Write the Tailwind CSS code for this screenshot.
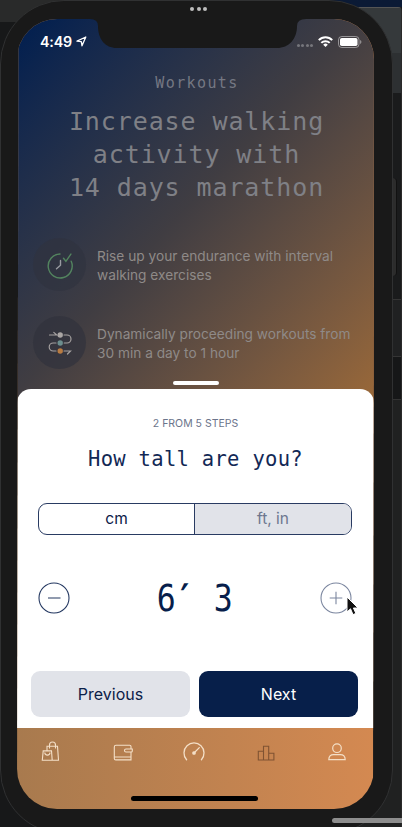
<!DOCTYPE html>
<html lang="en">
<head>
<meta charset="utf-8">
<title>Workouts</title>
<script src="https://cdn.jsdelivr.net/npm/@tailwindcss/browser@4"></script>
</head>
<body class="relative h-[827px] w-[402px] overflow-hidden bg-[#171819] font-[Inter,sans-serif]">
<!-- desktop behind the phone -->
<div class="absolute inset-x-0 top-0 h-[7px] bg-linear-to-r from-[#2b2c2c] from-40% to-[#0b1a35] to-50%"></div>
<div class="absolute top-0 left-0 h-[22px] w-[60px] bg-[#292a2a]"></div>
<div class="absolute top-[7px] right-0 flex h-[820px] w-[60px] flex-col rounded-tr border-t border-r border-t-[#555] border-r-[#2a2a2a] bg-[#191a1b]">
  <div class="h-[45px] bg-[#35393b]"></div><div class="h-[40px] bg-[#2d3032]"></div><div class="h-[206px] bg-[#1a1b1c]"></div>
  <div class="h-[58px] border-y border-[#353535] bg-[#202122]"></div><div class="h-[42px] bg-[#161718]"></div><div class="flex-1 border-t border-[#333] bg-[#202121]"></div>
</div>
<div class="absolute top-[178px] left-[391px] h-[98px] w-[6px] rounded-r border-r border-[#111] bg-[#2c2c2c]"></div>

<!-- phone -->
<div class="absolute top-0 left-0 h-[834px] w-[393px] rounded-[64px] border border-[#303132] bg-[#191919] pt-[18px] pl-[16px]">
  <div class="flex h-[790px] w-[357px] flex-col overflow-hidden rounded-[40px] bg-linear-to-r from-[#a87a4e] to-[#d48951] [clip-path:polygon(1.5px_0,100%_0,356px_100%,0_100%)]">
    <div class="h-[388px] shrink-0 bg-linear-to-br from-[#04204f] from-3% via-[#403d42] via-48% to-[#9b6938]">
      <div class="flex h-[45px] items-center justify-between pr-[12px] pl-[23px] text-white">
        <div class="flex items-center gap-[4px] text-[14.3px] font-semibold tracking-[-0.2px]"><span>4:49</span>
          <svg class="h-[11px] w-[11px]" viewBox="0 0 11 11" fill="none" stroke="currentColor" stroke-width="1.3" stroke-linejoin="round"><path d="M1 5.2 9.8 1 6 9.8 5.3 5.6Z"/></svg>
        </div>
        <div class="flex items-center">
          <div class="mt-[7px] mr-[5px] flex gap-[1.5px]"><i class="size-[3px] rounded-full bg-white/30"></i><i class="size-[3px] rounded-full bg-white/30"></i><i class="size-[3px] rounded-full bg-white/30"></i><i class="size-[3px] rounded-full bg-white/30"></i></div>
          <svg class="mr-[5px] h-[11px] w-[15px]" viewBox="0 0 15 11" fill="none" stroke="#fff" stroke-width="2"><path d="M.8 4.1a9.4 9.4 0 0 1 13.4 0M3.3 6.9a5.9 5.9 0 0 1 8.4 0"/><path d="M7.5 11 5.2 8.7a3.2 3.2 0 0 1 4.6 0Z" fill="#fff" stroke="none"/></svg>
          <svg class="h-[12px] w-[24px]" viewBox="0 0 24 12"><rect x=".5" y=".5" width="20.5" height="11" rx="3.3" fill="none" stroke="#fff" stroke-opacity=".45"/><rect x="2" y="2" width="17.5" height="8" rx="1.8" fill="#fff"/><path d="M22.2 4v4c1.6-.7 1.6-3.3 0-4Z" fill="#fff" fill-opacity=".5"/></svg>
        </div>
      </div>
      <div class="flex h-[38px] items-center justify-center pl-[3px] font-['DejaVu_Sans_Mono',monospace] text-[15px] tracking-[1.4px] text-[#757883]">Workouts</div>
      <div class="mt-[3px] flex flex-col items-center font-['DejaVu_Sans_Mono',monospace] text-[25px] leading-[33px] font-normal tracking-[.9px] whitespace-nowrap text-[#7f8086]">
        <span class="pl-[2px]">Increase walking</span>
        <span class="pl-[2px]">activity with</span>
        <span class="pl-[2px]">14 days marathon</span>
      </div>
      <div class="mt-[34px] flex flex-col gap-[25px] pl-[16px] text-[13.7px] leading-[19px] whitespace-nowrap text-[#8f8a88]">
        <div class="flex h-[53px] items-center gap-[11px]">
          <div class="flex size-[53px] items-center justify-center rounded-full bg-[#30333f]/65">
            <svg class="size-[28px]" viewBox="0 0 28 28" fill="none" stroke-width="1.4" stroke-linecap="round"><path d="M14 3A12 12 0 1 0 25.2 10.2M17.5 7.3l2.4 3 5-7.2" stroke="#53845f"/><path d="M14.5 9.5v4.7l-4 3.6" stroke="#999ba1"/></svg>
          </div>
          <p class="mt-[2px]">Rise up your endurance with interval<br>walking exercises</p>
        </div>
        <div class="flex h-[53px] items-center gap-[11px]">
          <div class="flex size-[53px] items-center justify-center rounded-full bg-[#30313c]/65">
            <svg class="size-[26px]" viewBox="0 0 26 26" fill="none" stroke="#a5a1a0" stroke-width="1.2" stroke-linecap="round"><path d="M2.5 5h7.2L6.8 2.4M17 5h3a4 4 0 0 1 0 8h-2.8M9 13H6.2a4 4 0 0 0 0 8H9M17 21h6.5l-3 3"/><g stroke="none"><circle cx="13.2" cy="5" r="2.7" fill="#aaa6a4"/><circle cx="13.2" cy="13" r="2.7" fill="#6c8e8e"/><circle cx="13.2" cy="21" r="2.7" fill="#b87c43"/></g></svg>
          </div>
          <p class="mt-[2px]">Dynamically proceeding workouts from<br>30 min a day to 1 hour</p>
        </div>
      </div>
    </div>

    <!-- height sheet -->
    <div class="relative z-10 -mt-[18px] h-[339px] shrink-0 rounded-t-[14px] bg-white px-[15px] text-[#0b2048]">
      <div class="absolute -top-[8px] left-[156px] h-[4px] w-[46px] rounded-full bg-white"></div>
      <p class="flex h-[69px] items-center justify-center text-[10.5px] text-[#6b748b]">2 FROM 5 STEPS</p>
      <h2 class="flex h-[3px] items-center justify-center font-['DejaVu_Sans_Mono',monospace] text-[20.5px] tracking-[.3px] whitespace-nowrap text-[#122855]">How tall are you?</h2>
      <div class="mr-[7px] ml-[6px] mt-[42px] flex h-[32px] overflow-hidden rounded-[9px] border border-[#293b62] text-[15.5px]">
        <div class="flex w-1/2 items-center justify-center border-r border-[#293b62]">cm</div>
        <div class="flex w-1/2 items-center justify-center bg-[#e1e3e9] text-[#6d778f]">ft, in</div>
      </div>
      <div class="mr-[7px] ml-[6px] mt-[47px] flex h-[32px] items-center justify-between">
        <svg class="size-[32px]" viewBox="0 0 32 32" fill="none" stroke="#243861" stroke-width="1.1"><circle cx="16" cy="16" r="15"/><path d="M10 16h12.5"/></svg>
        <span class="inline-block scale-x-[.83] font-['DejaVu_Sans_Mono',monospace] text-[38px] whitespace-nowrap text-[#071e4b]">6<span class="inline-block -translate-x-[2px] -skew-x-6 font-bold">′</span> 3</span>
        <svg class="size-[32px]" viewBox="0 0 32 32" fill="none" stroke="#7b869f" stroke-width="1.1"><circle cx="16" cy="16" r="15"/><path d="M9.7 16h12.6M16 9.7v12.6"/></svg>
      </div>
      <div class="-ml-px mr-px mt-[57px] flex gap-[9px] text-[16px]">
        <div class="flex h-[46px] flex-1 items-center justify-center rounded-[9px] bg-[#e1e3e9]">Previous</div>
        <div class="flex h-[46px] flex-1 items-center justify-center rounded-[9px] bg-[#071f4a] text-white">Next</div>
      </div>
    </div>

    <!-- tab bar -->
    <div class="relative flex-1">
      <div class="flex justify-between pt-[12px] pr-[25px] pl-[22px] text-[#f4dfc7]">
        <svg class="size-[24px]" viewBox="0 0 24 24" fill="none" stroke="currentColor" stroke-width="1.1"><path d="M8 11V6.3h10.5l1 14H13M10.5 8.5V5a3 3 0 0 1 6 0v3.5M4.2 10.9h8.3l.7 9.4H3.3Z"/><path d="M5.8 12.5a2.6 2.6 0 0 0 5.2 0"/></svg>
        <svg class="size-[24px]" viewBox="0 0 24 24" fill="none" stroke="currentColor" stroke-width="1.1"><path d="M20 9V6.5Q20 5.2 18.7 5.2H5Q3.3 5.2 3.3 7v11.4q0 1.5 1.5 1.5H20v-8M3.3 17H20M20 9h-5a1.5 1.5 0 0 0 0 3h5.3q1 0 1-1V9Z"/></svg>
        <svg class="size-[24px]" viewBox="0 0 24 24" fill="none" stroke="currentColor" stroke-width="1.3" stroke-linecap="round"><path d="M4.6 19.7a10 10 0 1 1 14.8 0M12.5 12.5l4.8-4.9"/><circle cx="12" cy="13" r="1.2" fill="currentColor"/></svg>
        <svg class="size-[24px] text-[#805332]" viewBox="0 0 24 24" fill="none" stroke="currentColor" stroke-width="1.1"><path d="M4.3 20V11.2h5.2V20ZM9.5 20V6.3h5.2V20ZM14.7 20v-6.8h5.2V20Z"/></svg>
        <svg class="size-[24px]" viewBox="0 0 24 24" fill="none" stroke="currentColor" stroke-width="1.2"><circle cx="12" cy="8.2" r="4.3"/><path d="M3.8 19.7c0-3.6 2.4-5 5-5h6.4c2.6 0 5 1.4 5 5Z"/></svg>
      </div>
      <div class="absolute bottom-[8px] left-[114px] h-[5px] w-[127px] rounded-full bg-black"></div>
    </div>
  </div>
</div>
<!-- notch -->
<svg class="absolute top-[15px] left-[90px] h-[34px] w-[216px]" viewBox="0 0 216 34"><path d="M0 0H216V4Q207 4 207 11C207 24 199 33 187 33H27C15 33 8 24 8 11Q8 4 0 4Z" fill="#191919"/></svg>
<div class="absolute top-[7px] left-[190px] flex gap-[2.5px]"><i class="size-[4px] rounded-full bg-[#bdbdbd]"></i><i class="size-[4px] rounded-full bg-[#bdbdbd]"></i><i class="size-[4px] rounded-full bg-[#bdbdbd]"></i></div>
<!-- pointer -->
<svg class="absolute top-[596px] left-[346px] h-[20px] w-[13px]" viewBox="0 0 13 20"><path d="M1 1v15l3.5-3.2L7 18.6l2.9-1.2L7.4 12H12Z" fill="#111" stroke="#fff"/></svg>
<div class="absolute top-[818px] left-[332px] h-[5px] w-[76px] rounded-full bg-[#8e8e8e]"></div>
</body>
</html>
